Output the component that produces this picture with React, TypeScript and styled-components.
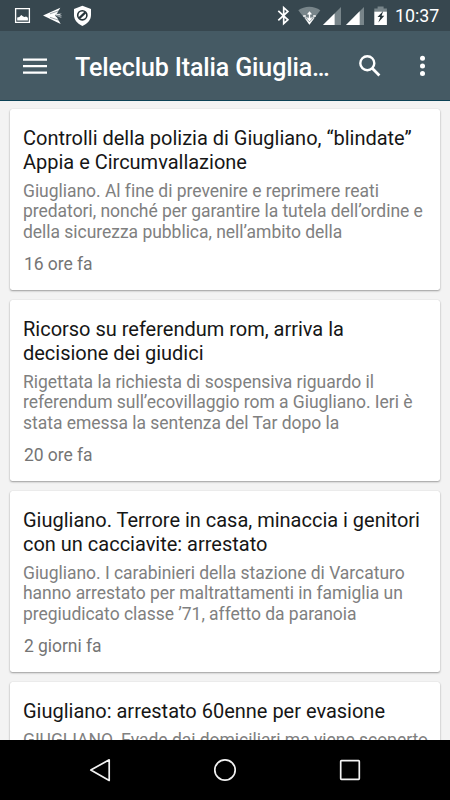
import React from 'react';
import styled, { createGlobalStyle } from 'styled-components';

const GlobalStyle = createGlobalStyle`
  * { box-sizing: border-box; }
  body { margin: 0; background: #f3f3f3; font-family: Roboto, sans-serif; }
`;

const Screen = styled.div`
  width: 450px;
  height: 800px;
  display: flex;
  flex-direction: column;
  overflow: hidden;
  background: #f3f3f3;
`;

const StatusBar = styled.header`
  flex: none;
  height: 31px;
  display: flex;
  justify-content: space-between;
  background: #37474f;
  color: #fff;
`;

const StatusIcons = styled.svg`
  display: block;
  flex: none;
`;

const StatusRight = styled.div`
  display: flex;
`;

const Clock = styled.time`
  width: 55px;
  font-size: 17.8px;
  line-height: 32px;
  font-weight: 400;
  white-space: nowrap;
`;

const Toolbar = styled.nav`
  flex: none;
  height: 70px;
  display: flex;
  align-items: center;
  padding: 0 17px 0 23px;
  background: #455a64;
  border-bottom: 1px solid #0c4256;
  color: #fff;
`;

const IconButton = styled.button<{ $width: number }>`
  width: ${({ $width }) => $width}px;
  height: 40px;
  flex: none;
  display: flex;
  align-items: center;
  padding: 0;
  border: 0;
  background: none;
  color: inherit;
`;

const Title = styled.h1`
  flex: 1;
  margin: 4px 0 0;
  font-size: 25px;
  line-height: 30px;
  font-weight: 500;
  letter-spacing: -0.12px;
  white-space: nowrap;
`;

const Feed = styled.main`
  flex: 1;
  min-height: 0;
  overflow: hidden;
  display: flex;
  flex-direction: column;
  gap: 10px;
  padding: 8px 10px 0;
`;

const Card = styled.article`
  flex: none;
  height: 181px;
  padding: 16.5px 13px 0;
  border-radius: 2.5px;
  background: #fff;
  box-shadow: 0 1px 2px rgba(0, 0, 0, 0.36), 0 0 1px rgba(0, 0, 0, 0.12);
`;

const Headline = styled.h2`
  margin: 0;
  font-size: 20px;
  line-height: 24px;
  font-weight: 400;
  letter-spacing: -0.01px;
  color: #161616;
`;

const Summary = styled.p`
  margin: 7px 0 0;
  font-size: 17.5px;
  line-height: 20.5px;
  letter-spacing: -0.03px;
  color: #808080;
`;

const Line = styled.span`
  display: block;
  white-space: nowrap;
`;

const Age = styled.p`
  margin: 12px 0 0 1px;
  font-size: 17.5px;
  line-height: 20.5px;
  letter-spacing: -0.06px;
  color: #757575;
`;

const NavBar = styled.footer`
  flex: none;
  height: 60px;
  display: flex;
  justify-content: center;
  align-items: center;
  gap: 95px;
  background: #000;
`;

const NavIcon = styled.svg`
  display: block;
  width: 30px;
  height: 30px;
  fill: none;
  stroke: #f2f2f2;
  stroke-width: 1.7;
  stroke-linejoin: round;
`;

interface Story {
  headline: string[];
  summary: string[];
  age?: string;
}

const stories: Story[] = [
  {
    headline: ['Controlli della polizia di Giugliano, “blindate”', 'Appia e Circumvallazione'],
    summary: [
      'Giugliano. Al fine di prevenire e reprimere reati',
      'predatori, nonché per garantire la tutela dell’ordine e',
      'della sicurezza pubblica, nell’ambito della',
    ],
    age: '16 ore fa',
  },
  {
    headline: ['Ricorso su referendum rom, arriva la', 'decisione dei giudici'],
    summary: [
      'Rigettata la richiesta di sospensiva riguardo il',
      'referendum sull’ecovillaggio rom a Giugliano. Ieri è',
      'stata emessa la sentenza del Tar dopo la',
    ],
    age: '20 ore fa',
  },
  {
    headline: ['Giugliano. Terrore in casa, minaccia i genitori', 'con un cacciavite: arrestato'],
    summary: [
      'Giugliano. I carabinieri della stazione di Varcaturo',
      'hanno arrestato per maltrattamenti in famiglia un',
      'pregiudicato classe ’71, affetto da paranoia',
    ],
    age: '2 giorni fa',
  },
  {
    headline: ['Giugliano: arrestato 60enne per evasione'],
    summary: ['GIUGLIANO. Evade dai domiciliari ma viene scoperto'],
  },
];

function NotificationIcons() {
  return (
    <StatusIcons width="110" height="31" viewBox="0 0 110 31">
      <path d="M15.6 8.6h13.8v13.8h-13.8z" fill="none" stroke="#fff" strokeWidth="1.3" />
      <path d="M17.2 20.5v-3l2.2-.6 1.8-2 1.7 1.4 1.4.7 1.8-.6 1.8 1.4v2.7z" fill="#fff" />
      <path d="M43 15.6 60.3 7.7 57 13.6 54.8 15.6 57 17.6 60.7 23.9z" fill="#fff" />
      <path d="m50 13.8 9.4-3.2M50 17.3l10 3.3" stroke="#37474f" strokeWidth=".5" />
      <path d="M55.2 15.6H62l-2.2-1.4 2.4-.8-5.8.6-1.2 1.2 5.2 2.2 1.8-.4z" fill="#dfe4e6" />
      <path d="M82.4 5.7 91 8.9v6.2c0 5-3.5 8.6-8.6 10.9-5-2.3-8.4-5.9-8.4-10.9V8.9z" fill="#fff" />
      <circle cx="82.3" cy="15.3" r="4.6" fill="none" stroke="#26343a" strokeWidth="1.6" />
      <path d="m79.3 18.1 6.1-5.7" stroke="#26343a" strokeWidth="2.2" />
    </StatusIcons>
  );
}

function SystemIcons() {
  return (
    <StatusIcons width="120" height="31" viewBox="275 0 120 31">
      <path d="m278.3 10.9 9.6 8.9-4.2 3.7V7.7l4.2 3.7-9.6 8.9" fill="none" stroke="#fff" strokeWidth="1.7" />
      <path d="M298.3 10.3c6.1-4.9 15.8-4.9 22 0L309.4 24.8z" fill="#78858a" />
      <path d="m304.8 18.1 4.6 6.7 5-6.7-1-1.2h-8z" fill="#fff" />
      <path d="m309.5 10.8-3.4 4h2.3v3h-2.8l3.9 4 3.9-4h-2.8v-3h2.3z" fill="#fff" stroke="#53636a" strokeWidth=".6" />
      <path d="M303.2 16h2.6M313.2 16h2.6" stroke="#fff" strokeWidth="1.6" />
      <path d="M341 7v18h-18z" fill="#78858a" />
      <path d="M334.6 13.4V25H323z" fill="#fff" />
      <path d="M364 7v18h-18z" fill="#78858a" />
      <path d="M359.7 11.3V25H346z" fill="#fff" />
      <path d="M374.3 8.5h3.3V6.4h6v2.1h3.3v3.6h-12.6z" fill="#78858a" />
      <path d="M374.3 11.7h12.6V25h-12.6z" fill="#fff" />
      <path d="m383.2 11-5.7 6h2.8l-2 5.4 6-6.7h-2.7z" fill="#26343a" />
    </StatusIcons>
  );
}

export default function App() {
  return (
    <>
      <GlobalStyle />
      <Screen>
        <StatusBar>
          <NotificationIcons />
          <StatusRight>
            <SystemIcons />
            <Clock>10:37</Clock>
          </StatusRight>
        </StatusBar>
        <Toolbar>
          <IconButton $width={52} aria-label="Menu">
            <svg width="24" height="18" viewBox="0 0 24 18">
              <path d="M0 2.6h24M0 9.1h24M0 15.6h24" stroke="#fff" strokeWidth="2.4" />
            </svg>
          </IconButton>
          <Title>Teleclub Italia Giuglia…</Title>
          <IconButton $width={57} aria-label="Cerca">
            <svg width="24" height="24" viewBox="0 0 24 24">
              <circle cx="9.3" cy="9.2" r="7" fill="none" stroke="#fff" strokeWidth="2.4" />
              <path d="m14.2 14.2 7.2 7.2" stroke="#fff" strokeWidth="2.8" />
            </svg>
          </IconButton>
          <IconButton $width={18} aria-label="Altro">
            <svg width="18" height="24" viewBox="0 0 18 24" fill="#fff">
              <circle cx="7.5" cy="4.3" r="2.5" />
              <circle cx="7.5" cy="12" r="2.5" />
              <circle cx="7.5" cy="19.5" r="2.5" />
            </svg>
          </IconButton>
        </Toolbar>
        <Feed>
          {stories.map((story) => (
            <Card key={story.headline[0]}>
              <Headline>
                {story.headline.map((text) => (
                  <Line key={text}>{text}</Line>
                ))}
              </Headline>
              <Summary>
                {story.summary.map((text) => (
                  <Line key={text}>{text}</Line>
                ))}
              </Summary>
              {story.age && <Age>{story.age}</Age>}
            </Card>
          ))}
        </Feed>
        <NavBar>
          <NavIcon viewBox="0 0 30 30">
            <path d="M24.2 4.8v20.6L5.8 15.1z" />
          </NavIcon>
          <NavIcon viewBox="0 0 30 30">
            <circle cx="15" cy="15" r="10.2" />
          </NavIcon>
          <NavIcon viewBox="0 0 30 30">
            <rect x="5.7" y="5.7" width="18.6" height="18.6" rx=".7" />
          </NavIcon>
        </NavBar>
      </Screen>
    </>
  );
}
